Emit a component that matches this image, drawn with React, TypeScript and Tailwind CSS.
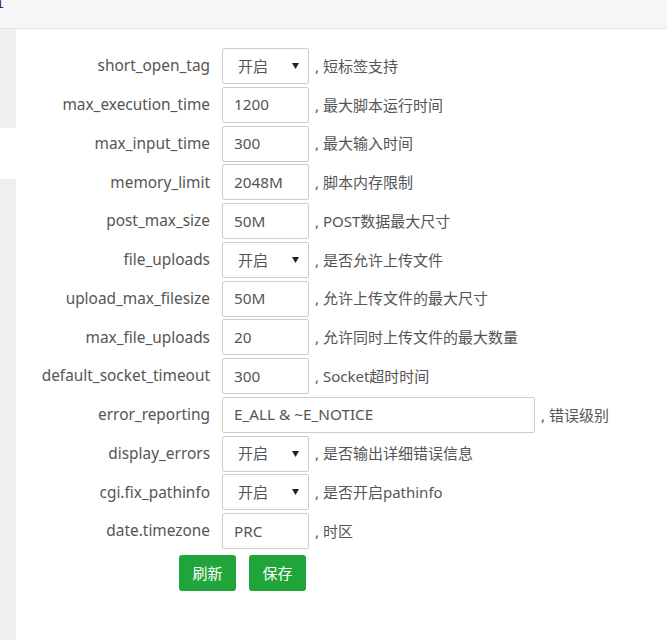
import React from "react";

type Row = {
  name: string;
  value: string;
  note: string;
  kind?: "select" | "wide";
};

const rows: Row[] = [
  { name: "short_open_tag", value: "开启", note: "短标签支持", kind: "select" },
  { name: "max_execution_time", value: "1200", note: "最大脚本运行时间" },
  { name: "max_input_time", value: "300", note: "最大输入时间" },
  { name: "memory_limit", value: "2048M", note: "脚本内存限制" },
  { name: "post_max_size", value: "50M", note: "POST数据最大尺寸" },
  { name: "file_uploads", value: "开启", note: "是否允许上传文件", kind: "select" },
  { name: "upload_max_filesize", value: "50M", note: "允许上传文件的最大尺寸" },
  { name: "max_file_uploads", value: "20", note: "允许同时上传文件的最大数量" },
  { name: "default_socket_timeout", value: "300", note: "Socket超时时间" },
  { name: "error_reporting", value: "E_ALL & ~E_NOTICE", note: "错误级别", kind: "wide" },
  { name: "display_errors", value: "开启", note: "是否输出详细错误信息", kind: "select" },
  { name: "cgi.fix_pathinfo", value: "开启", note: "是否开启pathinfo", kind: "select" },
  { name: "date.timezone", value: "PRC", note: "时区" },
];

const Control = ({ row }: { row: Row }) => {
  if (row.kind === "select") {
    return (
      <div className="flex items-center justify-between w-[87px] h-full border border-[#cccccc] rounded-[2px] pl-[15px] pr-[9px] text-[15px] text-[#555]">
        <span>{row.value}</span>
        <svg width="7" height="6" viewBox="0 0 7 6">
          <path d="M0 0h7L3.5 6z" fill="#222" />
        </svg>
      </div>
    );
  }
  return (
    <div
      className={`flex items-center h-full border border-[#cccccc] rounded-[2px] pl-[11px] text-[15.3px] text-[#555] ${
        row.kind === "wide" ? "w-[313px]" : "w-[87px]"
      }`}
    >
      {row.value}
    </div>
  );
};

export default function App() {
  return (
    <div
      className="min-h-[640px] bg-white text-[#555] text-[15px]"
      style={{ fontFamily: '"Noto Sans", "Noto Sans CJK SC", sans-serif' }}
    >
      <div className="h-[29px] bg-[#f6f6f6] border-b border-[#e4e4e4] overflow-hidden">
        <span className="block -mt-[10px] -ml-[12px] text-[16px] leading-[22px] text-[#333]">置</span>
      </div>
      <div className="flex">
        <div className="w-4 flex flex-col shrink-0">
          <div className="h-[99px] bg-[#efefef]" />
          <div className="h-[51px] bg-white" />
          <div className="h-[461px] bg-[#efefef]" />
        </div>
        <div className="flex-1 pt-[19px]">
          <div className="flex flex-col gap-[2.75px]">
            {rows.map((row) => (
              <div key={row.name} className="flex items-center h-[36px]">
                <div className="w-[194px] text-right text-[15.4px] whitespace-nowrap">{row.name}</div>
                <div className="ml-[12px] h-full">
                  <Control row={row} />
                </div>
                <span className="ml-[6px] whitespace-nowrap">, {row.note}</span>
              </div>
            ))}
          </div>
          <div className="flex gap-[13px] ml-[163px] mt-[6px]">
            <button className="w-[57px] h-[36px] rounded-[3px] bg-[#20a53a] text-white text-[15px]">
              刷新
            </button>
            <button className="w-[57px] h-[36px] rounded-[3px] bg-[#20a53a] text-white text-[15px]">
              保存
            </button>
          </div>
        </div>
      </div>
    </div>
  );
}
